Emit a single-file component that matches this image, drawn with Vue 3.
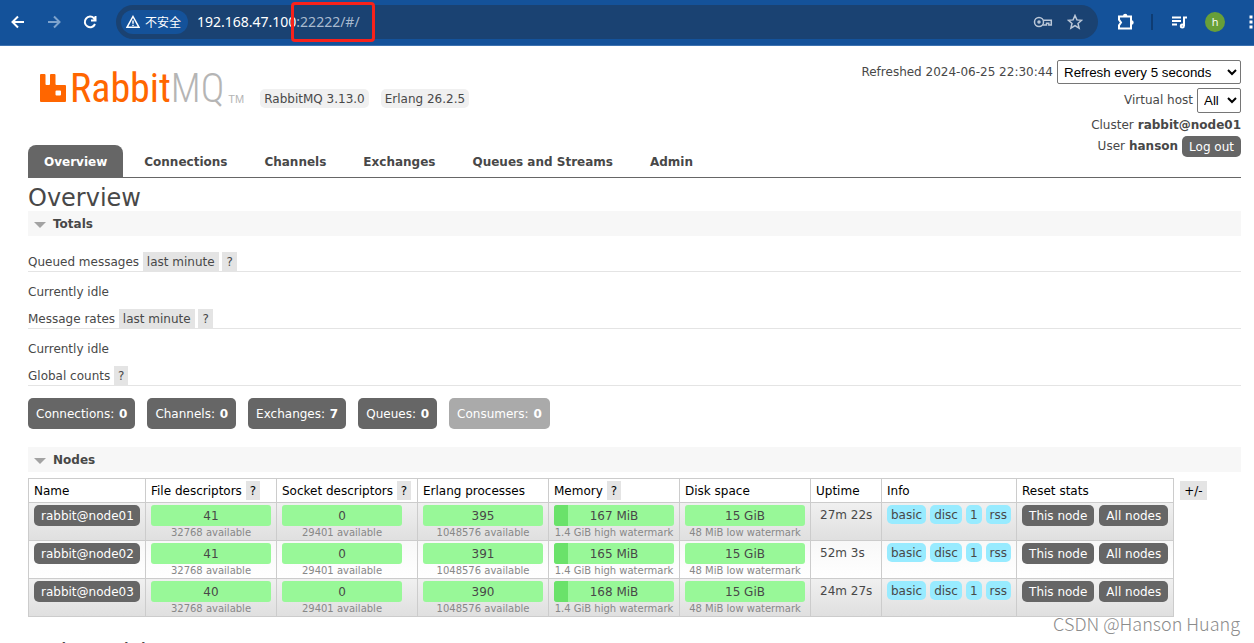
<script setup>
const tabs = ['Overview', 'Connections', 'Channels', 'Exchanges', 'Queues and Streams', 'Admin']
const counts = [
  { label: 'Connections', value: 0 },
  { label: 'Channels', value: 0 },
  { label: 'Exchanges', value: 7 },
  { label: 'Queues', value: 0 },
  { label: 'Consumers', value: 0, disabled: true },
]
const columns = [
  { label: 'Name', cls: 'c-name' },
  { label: 'File descriptors', help: true, cls: 'c-gauge' },
  { label: 'Socket descriptors', help: true, cls: 'c-socket' },
  { label: 'Erlang processes', cls: 'c-gauge' },
  { label: 'Memory', help: true, cls: 'c-gauge' },
  { label: 'Disk space', cls: 'c-gauge' },
  { label: 'Uptime', cls: 'c-uptime' },
  { label: 'Info', cls: 'c-info' },
  { label: 'Reset stats', cls: 'c-reset' },
]
const makeNode = (name, fd, procs, mem, uptime) => ({
  name,
  uptime,
  gauges: [
    { value: fd, note: '32768 available', fill: 0 },
    { value: '0', note: '29401 available', fill: 0 },
    { value: procs, note: '1048576 available', fill: 0 },
    { value: mem, note: '1.4 GiB high watermark', fill: 12 },
    { value: '15 GiB', note: '48 MiB low watermark', fill: 0 },
  ],
})
const nodes = [
  makeNode('rabbit@node01', '41', '395', '167 MiB', '27m 22s'),
  makeNode('rabbit@node02', '41', '391', '165 MiB', '52m 3s'),
  makeNode('rabbit@node03', '40', '390', '168 MiB', '24m 27s'),
]
const info = ['basic', 'disc', '1', 'rss']
</script>

<template>
  <div class="screen">
    <header class="browser">
      <button class="nav" aria-label="Back">
        <svg width="16" height="16" viewBox="0 0 16 16"><path d="M14 8H3M8 2.5 2.5 8 8 13.5" /></svg>
      </button>
      <button class="nav dim" aria-label="Forward">
        <svg width="16" height="16" viewBox="0 0 16 16"><path d="M2 8h11M8 2.5 13.5 8 8 13.5" /></svg>
      </button>
      <button class="nav" aria-label="Reload">
        <svg width="16" height="16" viewBox="0 0 16 16"><path d="M13 10A5.300 5.300 0 1 1 12 4.300L13.500 6M13.500 2v4.500H9" /></svg>
      </button>
      <div class="address">
        <button class="security">
          <svg width="14" height="14" viewBox="0 0 14 14"><path d="M7 1.500 13 12.300H1ZM7 5.500v3.200M7 9.700v1.300" /></svg>
          <span>不安全</span>
        </button>
        <div class="url">192.168.47.100<span class="marked">:22222/#/</span></div>
        <button class="tool dimmer" aria-label="Passwords">
          <svg width="20" height="14" viewBox="0 0 20 14"><circle cx="6" cy="7" r="4.500" /><circle cx="6" cy="7" r="1" /><path d="M10.200 5.300H18.300V10H15.800V8.200H13.500V10H9.800" /></svg>
        </button>
        <button class="tool dimmer" aria-label="Bookmark">
          <svg width="16" height="16" viewBox="0 0 16 16"><path d="m8 1.500 1.900 4.400 4.700.4-3.600 3.100 1.100 4.700L8 11.600l-4.100 2.500L5 9.400 1.400 6.300l4.700-.4Z" /></svg>
        </button>
      </div>
      <button class="tool ext" aria-label="Extensions">
        <svg width="18" height="18" viewBox="0 0 18 18"><path d="M2 3.500H14V15.500H2V12.300L4 9.500 2 6.700Z" /><path class="solid" d="M6 3A2.200 2.200 0 0 1 10.400 3ZM14.500 7.300A2.200 2.200 0 0 1 14.500 11.700Z" /></svg>
      </button>
      <span class="divider"></span>
      <button class="tool media" aria-label="Media control">
        <svg width="16" height="14" viewBox="0 0 16 14"><path d="M1 2.500h9M1 6h9M1 9.500h5M13 11V2.500H16" /><circle cx="11.300" cy="11" r="1.500" /></svg>
      </button>
      <button class="avatar">h</button>
      <button class="tool more" aria-label="Menu">
        <svg width="4" height="16" viewBox="0 0 4 16"><path class="solid" d="M.5 1.500h3v3h-3zM.5 6.500h3v3h-3zM.5 11.500h3v3h-3z" /></svg>
      </button>
    </header>

    <div class="page">
      <div class="masthead">
        <div class="brand">
          <a href="#/" class="logo">
            <svg width="26" height="28" viewBox="0 0 26 28"><path fill="#f60" fill-rule="evenodd" d="M1 0H4.500Q5.500 0 5.500 1V10Q5.500 11 6.500 11H9Q10 11 10 10V1Q10 0 11 0H14.500Q15.500 0 15.500 1V10Q15.500 11 16.500 11H25Q26 11 26 12V27Q26 28 25 28H1Q0 28 0 27V1Q0 0 1 0ZM16.500 16.500Q15.500 16.500 15.500 17.500V20.500Q15.500 21.500 16.500 21.500H20Q21 21.500 21 20.500V17.500Q21 16.500 20 16.500Z" /></svg>
            <span class="word">Rabbit<span class="mq">MQ</span></span><span class="tm">TM</span>
          </a>
          <span class="version">RabbitMQ 3.13.0</span>
          <span class="version">Erlang 26.2.5</span>
        </div>
        <div class="status">
          <div class="line">
            <label for="refresh">Refreshed 2024-06-25 22:30:44</label>
            <select id="refresh" class="wide"><option>Refresh every 5 seconds</option></select>
          </div>
          <div class="line">
            <label for="vhost">Virtual host</label>
            <select id="vhost" class="vhost"><option>All</option></select>
          </div>
          <div class="line cluster">Cluster <b>rabbit@node01</b></div>
          <div class="line">User <b>hanson</b> <button class="btn">Log out</button></div>
        </div>
      </div>

      <nav class="tabs">
        <a v-for="(tab, i) in tabs" :key="tab" href="#/" :class="{ active: i === 0 }">{{ tab }}</a>
      </nav>

      <main>
        <h1>Overview</h1>
        <h2>Totals</h2>
        <section class="totals">
          <h3>Queued messages <button class="chip">last minute</button> <button class="chip">?</button></h3>
          <p>Currently idle</p>
          <h3>Message rates <button class="chip">last minute</button> <button class="chip">?</button></h3>
          <p>Currently idle</p>
          <h3>Global counts <button class="chip">?</button></h3>
          <div class="counts">
            <a v-for="c in counts" :key="c.label" href="#/" :class="{ off: c.disabled }">{{ c.label }}: <b>{{ c.value }}</b></a>
          </div>
        </section>

        <h2>Nodes</h2>
        <div class="nodes">
          <table>
            <thead>
              <tr>
                <th v-for="c in columns" :key="c.label" :class="c.cls">{{ c.label }} <button v-if="c.help" class="chip">?</button></th>
              </tr>
            </thead>
            <tbody>
              <tr v-for="n in nodes" :key="n.name">
                <td><a href="#/" class="btn node">{{ n.name }}</a></td>
                <td v-for="(g, i) in n.gauges" :key="i">
                  <div class="gauge"><i :style="{ width: g.fill + '%' }"></i><span>{{ g.value }}</span></div>
                  <small>{{ g.note }}</small>
                </td>
                <td class="uptime">{{ n.uptime }}</td>
                <td><div class="group tags"><abbr v-for="t in info" :key="t">{{ t }}</abbr></div></td>
                <td><div class="group"><button class="btn">This node</button><button class="btn">All nodes</button></div></td>
              </tr>
            </tbody>
          </table>
          <button class="chip plus">+/-</button>
        </div>
        <h2 class="closed">Churn statistics</h2>
      </main>
    </div>
    <div class="watermark">CSDN @Hanson Huang</div>
  </div>
</template>

<style>
body {
  margin: 0;
  background: #fff;
}
</style>

<style scoped>
.screen {
  position: relative;
  height: 100vh;
  overflow: hidden;
  color: #484848;
  font: 12px/17px "DejaVu Sans", sans-serif;
}
* { box-sizing: border-box; }
button {
  font: inherit;
  color: inherit;
  border: 0;
  padding: 0;
  margin: 0;
  background: none;
}
a { color: inherit; text-decoration: none; }

.browser {
  display: flex;
  align-items: center;
  height: 46px;
  padding: 0 0 2px 10px;
  background: #14529a;
  border-bottom: 1px solid #3d72b0;
  color: #fff;
  overflow: hidden;
}
.browser svg {
  display: block;
  fill: none;
  stroke: currentColor;
  stroke-width: 2;
}
.browser .solid { fill: currentColor; stroke: none; }
.nav { margin-right: 20px; }
.nav + .nav + .nav { margin-right: 18px; }
.dim { color: #7ea3cd; }
.address {
  flex: 1;
  display: flex;
  align-items: center;
  height: 34px;
  padding: 0 15px 0 5px;
  border-radius: 17px;
  background: #1a4272;
}
.security {
  display: flex;
  align-items: center;
  gap: 5px;
  height: 24px;
  padding: 0 7px 0 5px;
  border-radius: 12px;
  background: #14529a;
  font: 12px/24px "Noto Sans CJK SC", sans-serif;
}
.browser .security svg { stroke-width: 1.5; }
.url {
  flex: 1;
  padding-left: 9px;
  font: 14px/20px "Noto Sans", sans-serif;
}
.marked {
  position: relative;
  color: #a9bbd0;
}
.marked::after {
  content: "";
  position: absolute;
  inset: -10px -15px -11px -5px;
  border: 3px solid #f8221b;
  border-radius: 4px;
}
.dimmer { color: #bcc8d8; margin-left: 14px; }
.browser .dimmer svg { stroke-width: 1.5; }
.ext { margin-left: 19px; }
.divider {
  width: 2px;
  height: 16px;
  margin: 0 18px 0 16px;
  background: #0e3c73;
}
.avatar {
  width: 20px;
  height: 20px;
  margin: 0 24px 0 18px;
  border-radius: 50%;
  background: #689f38;
  font: 11px/20px "Open Sans", sans-serif;
}
.more { margin-right: 1px; }

.page { padding: 0 13px 0 28px; }
.masthead {
  display: flex;
  justify-content: space-between;
  height: 99px;
}
.brand {
  display: flex;
  align-items: flex-start;
  padding: 28px 0 0 12px;
}
.logo {
  display: flex;
  align-items: flex-start;
  margin-right: 16px;
  color: #f60;
}
.word {
  margin: -3px 0 0 4px;
  font: 40px/36px "Roboto Condensed", "Roboto", sans-serif;
}
.mq { color: #b5b5b5; font-weight: 300; }
.tm {
  margin: 18px 0 0 4px;
  color: #b5b5b5;
  font: 11px/14px "Liberation Sans", sans-serif;
}
.version {
  margin: 15px 12px 0 0;
  padding: 2px 4px 0;
  border-radius: 5px;
  background: #f0f0f0;
}
.status {
  display: flex;
  flex-direction: column;
  align-items: flex-end;
  padding-top: 14px;
}
.line {
  display: flex;
  align-items: center;
  gap: 4px;
  margin-bottom: 4px;
}
.cluster { margin-bottom: 2px; }
select {
  height: 24px;
  border: 1px solid #767676;
  border-radius: 2px;
  background: #fff;
  color: #000;
  padding: 0 0 0 2px;
  font-family: "Liberation Sans", sans-serif;
}
.wide { width: 184px; }
.vhost { width: 44px; height: 25px; }
.btn {
  display: inline-block;
  padding: 3px 7px 1px;
  border-radius: 5px;
  background: #666;
  color: #fff;
  white-space: nowrap;
}
.node { padding-right: 6px; }

.tabs {
  display: flex;
  gap: 5px;
  border-bottom: 1px solid #666;
  font-weight: bold;
}
.tabs a {
  padding: 9px 16px 6px;
  border-radius: 8px 8px 0 0;
}
.tabs .active { background: #666; color: #fff; }

h1 {
  margin: 0;
  padding: 7px 0 0;
  font: 24px/26px "DejaVu Sans", sans-serif;
}
h2 {
  display: flex;
  align-items: center;
  gap: 7px;
  margin: 0;
  padding: 5px 6px 3px;
  background: #f7f7f7;
  font: bold 12px/17px "DejaVu Sans", sans-serif;
}
h2::before {
  content: "";
  border: 6px solid transparent;
  border-top-color: #a3a3a3;
  border-bottom: 0;
}
.totals { padding: 16px 0 18px; }
h3 {
  margin: 0;
  border-bottom: 1px solid #e4e4e4;
  font: 12px/17px "DejaVu Sans", sans-serif;
}
.chip {
  padding: 2px 4px 0;
  background: #e4e4e4;
  line-height: 17px;
}
.totals p { margin: 12px 0 8px; }
.counts {
  display: flex;
  gap: 12px;
  margin-top: 12px;
}
.counts a {
  padding: 8px 8px 6px;
  border-radius: 5px;
  background: #666;
  color: #fff;
}
.counts b { margin-left: 1px; }
.counts .off { background: #aaa; }

.nodes {
  display: flex;
  align-items: flex-start;
  gap: 6px;
  padding: 6px 0 18px;
}
table { border-collapse: collapse; }
th, td {
  padding: 2px 5px 1px;
  border: 1px solid #ccc;
  text-align: left;
  vertical-align: top;
  white-space: nowrap;
}
th {
  height: 24px;
  padding-bottom: 0;
  color: #000;
  font-weight: normal;
  line-height: 21px;
}
td { height: 38px; }
tbody tr { background: linear-gradient(#f0f0f0, #dfdfdf); }
tbody tr:nth-child(even) { background: linear-gradient(#f8f8f8, #fff); }
.c-name { width: 117px; }
.c-gauge { width: 131px; }
.c-socket { width: 141px; }
.c-uptime { width: 71px; }
.c-info { width: 135px; }
.c-reset { width: 157px; }
.gauge {
  position: relative;
  width: 120px;
  height: 21px;
  border-radius: 3px;
  background: #98f898;
  overflow: hidden;
  text-align: center;
  line-height: 22px;
}
.gauge i {
  position: absolute;
  inset: 0 auto 0 0;
  background: #6ae26a;
}
.gauge span { position: relative; }
small {
  display: block;
  width: 120px;
  margin-top: 1px;
  text-align: center;
  color: #888;
  font-size: 10px;
  line-height: 12px;
}
td.uptime { padding-left: 9px; line-height: 20px; }
.group { display: flex; gap: 5px; }
.tags { gap: 4px; }
abbr {
  padding: 2px 4px 0;
  border-radius: 5px;
  background: #98ebff;
}
.plus { margin-top: 3px; color: #000; }
.closed { background: none; gap: 9px; padding-left: 10px; }
.closed::before {
  border: 6px solid transparent;
  border-left-color: #a3a3a3;
  border-right: 0;
}
.watermark {
  position: absolute;
  right: 14px;
  bottom: 8px;
  color: #8c8c8c;
  font: 18px/24px "Noto Sans CJK SC", sans-serif;
  font-weight: 300;
  text-shadow: 1px 1px 1px #fff;
}
</style>
